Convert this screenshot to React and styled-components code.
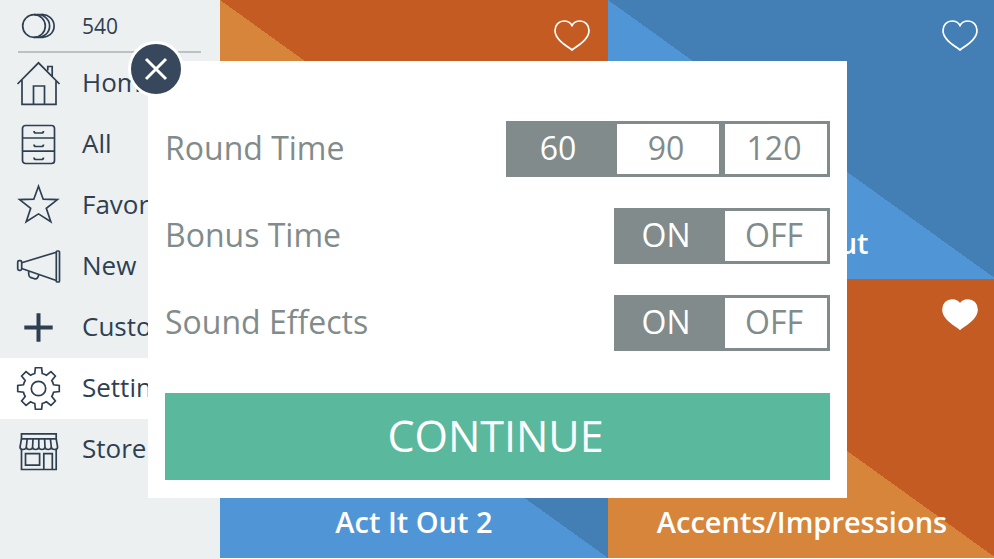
import React, { useState } from 'react';
import styled, { createGlobalStyle } from 'styled-components';

const GlobalStyle = createGlobalStyle`
    * {
        box-sizing: border-box;
    }

    body {
        margin: 0;
        background: #ffffff;
        font-family: 'Open Sans', 'Noto Sans', sans-serif;
    }

    button {
        padding: 0;
        border: none;
        font-family: inherit;
        cursor: pointer;
    }
`;

const Page = styled.div`
    display: flex;
    height: 100vh;
    overflow: hidden;
`;

const Sidebar = styled.aside`
    flex: 0 0 220px;
    background: #ecf0f1;
    color: #2f3f52;
`;

const Coins = styled.div`
    display: flex;
    align-items: center;
    gap: 21px;
    height: 53px;
    margin: 0 19px 0 18px;
    border-bottom: 2px solid #bcc1c3;
    font-size: 21px;
    font-weight: 500;

    svg {
        margin-left: -2px;
    }
`;

const MenuLink = styled.a`
    display: flex;
    align-items: center;
    gap: 21px;
    height: 61px;
    padding-left: 16px;
    background: ${({ $active }) => ($active ? '#ffffff' : 'transparent')};
    color: inherit;
    font-size: 26px;
    font-weight: 500;
    text-decoration: none;
`;

const MenuTitle = styled.span`
    padding-bottom: 4px;
`;

const LineIcon = styled.svg`
    flex: none;
    width: 45px;
    height: 45px;
    fill: none;
    stroke: #2f3f52;
    stroke-width: ${({ $bold }) => ($bold ? 4 : 1.7)};
`;

const Decks = styled.main`
    flex: 1;
    display: grid;
    grid-template-columns: 1fr 1fr;
    grid-template-rows: 1fr 1fr;
    margin-right: -2px;
    padding-bottom: 1px;
`;

const deckColors = {
    orange: ['#d6853a', '#c45b22'],
    blue: ['#5096d6', '#437fb5'],
};

const Deck = styled.article`
    display: flex;
    flex-direction: column;
    justify-content: space-between;
    padding: 20px 18px;
    background: linear-gradient(
        to top right,
        ${({ $color }) => deckColors[$color][0]} 50%,
        ${({ $color }) => deckColors[$color][1]} 50%
    );
`;

const FavoriteButton = styled.button`
    align-self: flex-end;
    width: 36px;
    height: 31px;
    background: none;

    svg {
        display: block;
        fill: ${({ $filled }) => ($filled ? '#ffffff' : 'none')};
        stroke: #ffffff;
        stroke-width: 1.7;
    }
`;

const DeckTitle = styled.h2`
    margin: 0;
    font-size: 29px;
    line-height: 32px;
    font-weight: 600;
    color: #ffffff;
    text-align: center;
`;

const Overlay = styled.div`
    position: fixed;
    inset: 0;
    display: flex;
    align-items: center;
    padding: 0 147px 0 148px;
`;

const Modal = styled.section`
    position: relative;
    flex: 1;
    display: flex;
    flex-direction: column;
    gap: 31px;
    padding: 60px 17px 18px;
    background: #ffffff;
`;

const CloseButton = styled.button`
    position: absolute;
    top: -20px;
    left: -20px;
    display: flex;
    align-items: center;
    justify-content: center;
    width: 56px;
    height: 56px;
    border: 3px solid #ffffff;
    border-radius: 50%;
    background: #37485c;
`;

const SettingRow = styled.div`
    display: flex;
    align-items: center;
    justify-content: space-between;
    color: #818b8b;
    font-size: 32px;
    line-height: 48px;
`;

const SettingTitle = styled.span`
    padding-bottom: 2px;
`;

const Segments = styled.div`
    display: flex;
`;

const Segment = styled.label`
    width: 108px;
    padding: 0 4px 2px 0;
    border: 3px solid #818b8b;
    background: ${({ $checked }) => ($checked ? '#818b8b' : '#ffffff')};
    color: ${({ $checked }) => ($checked ? '#ffffff' : '#818b8b')};
    text-align: center;
    cursor: pointer;
`;

const SegmentInput = styled.input`
    position: absolute;
    opacity: 0;
    margin: 0;
    pointer-events: none;
`;

const ContinueButton = styled.button`
    height: 87px;
    margin-top: 11px;
    padding: 0 4px 2px 0;
    background: #5ab89d;
    color: #ffffff;
    font-size: 43px;
`;

// eight teeth, each one from root to tip and back to root
const gearPath = () => {
    const point = (radius, degrees) => {
        const angle = (degrees * Math.PI) / 180;
        return `${(22.5 + radius * Math.sin(angle)).toFixed(2)} ${(22.5 - radius * Math.cos(angle)).toFixed(2)}`;
    };
    const teeth = [0, 45, 90, 135, 180, 225, 270, 315].map(a =>
        `${point(15.5, a - 14)} L${point(21, a - 8.5)} L${point(21, a + 8.5)} L${point(15.5, a + 14)}`
    );
    return `M${teeth.join(' A15.5 15.5 0 0 1 ')} A15.5 15.5 0 0 1 ${point(15.5, -14)} Z`;
};

const icons = {
    coins: (
        <>
            <circle cx="18" cy="23" r="11.3" />
            <path d="M20.2 11.9 A11.3 11.3 0 1 1 20.2 34.1 M24.7 11.9 A11.3 11.3 0 1 1 24.7 34.1 M18 11.7 H27 M18 34.3 H27" />
        </>
    ),
    home: (
        <path d="M1.5 23 L22.5 1.8 L43.5 23 M6 19 V43.3 H40 V19 M17.5 43 V25 H28.5 V43 M31.8 9.5 V5.5 H36.2 V15" />
    ),
    all: (
        <>
            <rect x="6.5" y="3.5" width="32" height="38" rx="3" />
            <path d="M6.5 16 H38.5 M6.5 29.2 H38.5" />
            <path d="M18 9 Q18 11 20 11 H25.5 Q27.5 11 27.5 9 M18 22.5 Q18 24.5 20 24.5 H25.5 Q27.5 24.5 27.5 22.5 M18 35.5 Q18 37.5 20 37.5 H25.5 Q27.5 37.5 27.5 35.5" />
        </>
    ),
    favorites: (
        <path d="M22.5 3.2 L27.2 16.2 L41.4 16.6 L30.3 25.3 L34.8 38.8 L22.5 30.9 L10.2 38.8 L14.7 25.3 L3.6 16.6 L17.8 16.2 Z" />
    ),
    fresh: (
        <>
            <rect x="40.3" y="7" width="3.2" height="31" rx="1" />
            <rect x="1.7" y="16.7" width="4" height="9.6" rx="1.5" />
            <path d="M5.7 18.8 L40.3 8.2 M5.7 24.5 L40.3 36.5 M12.8 27 C12.3 31 12.6 32.5 14.5 33.4 L18.5 34.8 C21 35.4 22 34 22.8 30.5" />
        </>
    ),
    custom: <path d="M22.5 8.3 V36.7 M8.3 22.5 H36.7" />,
    settings: (
        <>
            <path d={gearPath()} />
            <circle cx="22.5" cy="22.5" r="7.2" />
        </>
    ),
    store: (
        <>
            <path d="M5.5 11.8 V6.8 H40.2 V11.8 Z M5.5 22 V42.5 H40.2 V22" />
            <path d="M5.5 11.8 L4 20 Q4 22.5 7 22.5 Q10 22.5 10.3 20 Q10.5 22.5 13.4 22.5 Q16.4 22.5 16.6 20 Q16.8 22.5 19.6 22.5 Q22.6 22.5 22.8 20 Q23 22.5 26 22.5 Q28.8 22.5 29 20 Q29.2 22.5 32.2 22.5 Q35 22.5 35.3 20 Q35.6 22.5 38.5 22.5 Q41.6 22.5 41.6 20 L40.2 11.8" />
            <path d="M11.2 11.8 L10.3 20 M17 11.8 L16.6 20 M22.8 11.8 V20 M28.6 11.8 L29 20 M34.4 11.8 L35.3 20" />
            <path d="M9.5 26.7 H23.6 V38.2 H9.5 Z M27.8 42.5 V26.7 H36.3 V42.5" />
        </>
    ),
};

const menu = [
    { icon: 'home', title: 'Home' },
    { icon: 'all', title: 'All' },
    { icon: 'favorites', title: 'Favorites' },
    { icon: 'fresh', title: 'New' },
    { icon: 'custom', title: 'Custom' },
    { icon: 'settings', title: 'Settings' },
    { icon: 'store', title: 'Store' },
];

const decks = [
    { id: 1, color: 'orange', title: '' },
    { id: 2, color: 'blue', title: 'Act It Out' },
    { id: 3, color: 'blue', title: 'Act It Out 2' },
    { id: 4, color: 'orange', title: 'Accents/Impressions' },
];

const options = [
    { name: 'round', title: 'Round Time', values: ['60', '90', '120'] },
    { name: 'bonus', title: 'Bonus Time', values: ['ON', 'OFF'] },
    { name: 'sound', title: 'Sound Effects', values: ['ON', 'OFF'] },
];

const Icon = ({ name }) => (
    <LineIcon viewBox="0 0 45 45" $bold={name === 'custom'} aria-hidden="true">
        {icons[name]}
    </LineIcon>
);

const Heart = () => (
    <svg width="36" height="31" viewBox="0 0 36 31" aria-hidden="true">
        <path d="M18 30 C12 25.3 1 19.5 1 10.5 C1 5 5 1 10 1 C13.7 1 16.6 2.8 18 5.5 C19.4 2.8 22.3 1 26 1 C31 1 35 5 35 10.5 C35 19.5 24 25.3 18 30 Z" />
    </svg>
);

const Setting = ({ option, value, onChange }) => (
    <SettingRow role="radiogroup" aria-labelledby={`${option.name}-title`}>
        <SettingTitle id={`${option.name}-title`}>{option.title}</SettingTitle>
        <Segments>
            {option.values.map(item => (
                <Segment key={item} $checked={item === value}>
                    <SegmentInput
                        type="radio"
                        name={option.name}
                        value={item}
                        checked={item === value}
                        onChange={() => onChange(item)}
                    />
                    {item}
                </Segment>
            ))}
        </Segments>
    </SettingRow>
);

const App = () => {
    const [open, setOpen] = useState(true);
    const [liked, setLiked] = useState([4]);
    const [settings, setSettings] = useState({ round: '60', bonus: 'ON', sound: 'ON' });

    const toggleLike = (id) => {
        setLiked(liked.includes(id) ? liked.filter(item => item !== id) : [...liked, id]);
    };

    return (
        <>
            <GlobalStyle />
            <Page>
                <Sidebar>
                    <Coins><Icon name="coins" />540</Coins>
                    <nav>
                        {menu.map(({ icon, title }) => (
                            <MenuLink key={icon} href={`#${icon}`} $active={icon === 'settings'}>
                                <Icon name={icon} />
                                <MenuTitle>{title}</MenuTitle>
                            </MenuLink>
                        ))}
                    </nav>
                </Sidebar>
                <Decks>
                    {decks.map(({ id, color, title }) => (
                        <Deck key={id} $color={color}>
                            <FavoriteButton
                                aria-label="Favorite"
                                $filled={liked.includes(id)}
                                onClick={() => toggleLike(id)}
                            >
                                <Heart />
                            </FavoriteButton>
                            {title && <DeckTitle>{title}</DeckTitle>}
                        </Deck>
                    ))}
                </Decks>
            </Page>
            {open &&
                <Overlay>
                    <Modal role="dialog" aria-label="Settings">
                        <CloseButton aria-label="Close" onClick={() => setOpen(false)}>
                            <svg width="24" height="24" viewBox="0 0 24 24" stroke="#ffffff" strokeWidth="3">
                                <path d="M2 2 L22 22 M22 2 L2 22" />
                            </svg>
                        </CloseButton>
                        {options.map(option => (
                            <Setting
                                key={option.name}
                                option={option}
                                value={settings[option.name]}
                                onChange={value => setSettings({ ...settings, [option.name]: value })}
                            />
                        ))}
                        <ContinueButton onClick={() => setOpen(false)}>CONTINUE</ContinueButton>
                    </Modal>
                </Overlay>
            }
        </>
    );
};

export default App;
